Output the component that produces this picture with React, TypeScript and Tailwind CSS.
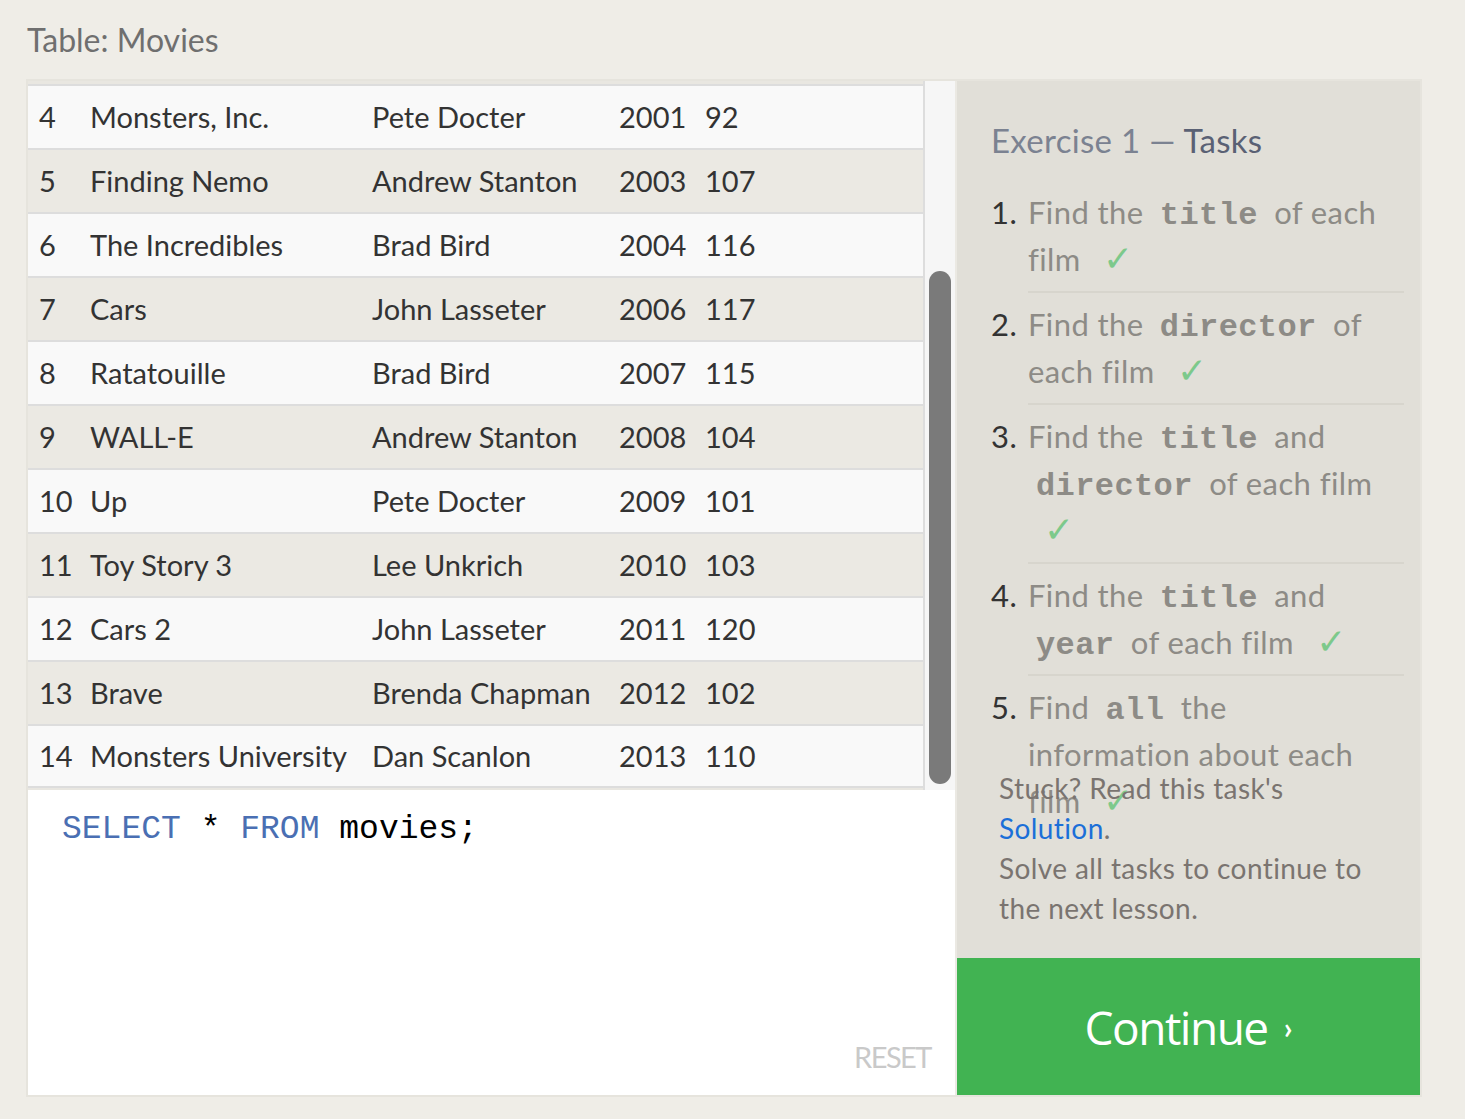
import React from 'react';

type Movie = { id: number; title: string; director: string; year: number; length: number };

const movies: Movie[] = [
  { id: 4, title: 'Monsters, Inc.', director: 'Pete Docter', year: 2001, length: 92 },
  { id: 5, title: 'Finding Nemo', director: 'Andrew Stanton', year: 2003, length: 107 },
  { id: 6, title: 'The Incredibles', director: 'Brad Bird', year: 2004, length: 116 },
  { id: 7, title: 'Cars', director: 'John Lasseter', year: 2006, length: 117 },
  { id: 8, title: 'Ratatouille', director: 'Brad Bird', year: 2007, length: 115 },
  { id: 9, title: 'WALL-E', director: 'Andrew Stanton', year: 2008, length: 104 },
  { id: 10, title: 'Up', director: 'Pete Docter', year: 2009, length: 101 },
  { id: 11, title: 'Toy Story 3', director: 'Lee Unkrich', year: 2010, length: 103 },
  { id: 12, title: 'Cars 2', director: 'John Lasseter', year: 2011, length: 120 },
  { id: 13, title: 'Brave', director: 'Brenda Chapman', year: 2012, length: 102 },
  { id: 14, title: 'Monsters University', director: 'Dan Scanlon', year: 2013, length: 110 },
];

function Code({ children }: { children: React.ReactNode }) {
  return (
    <code className="px-[8px] font-['Liberation_Mono',monospace] text-[32px] leading-none font-bold text-[#8d8b86]">
      {children}
    </code>
  );
}

function Check({ className = '' }: { className?: string }) {
  return (
    <span className={`font-['DejaVu_Sans',sans-serif] text-[36px] leading-none text-[#7dc98b] ${className}`}>✓</span>
  );
}

function Task({ n, last, children }: { n: number; last?: boolean; children: React.ReactNode }) {
  return (
    <li className="flex">
      <span className="w-[37px] shrink-0 py-2 text-[#333]">{n}.</span>
      <div className={`flex-1 py-2 ${last ? '' : 'border-b-2 border-[#d7d5cd]'}`}>{children}</div>
    </li>
  );
}

export default function App() {
  return (
    <div className="min-h-screen bg-[#efede7] font-['Lato',sans-serif]">
      <h1 className="pl-[27px] pt-[20px] pb-[19px] text-[32px] leading-[40px] text-[#6f6f6f]">Table: Movies</h1>

      <div className="ml-[26px] flex h-[1018px] w-[1396px] border-2 border-[#e6e4dd]">
        {/* left: result table + editor */}
        <div className="flex w-[927px] flex-col">
          <div className="flex h-[709px] shrink-0">
            <div className="flex-1 bg-[#e9e7e1] pt-[3px]">
              {movies.map((m, i) => (
                <div
                  key={m.id}
                  className={`grid h-[64px] grid-cols-[51px_282px_247px_86px_1fr] items-center border-t-2 border-[#dddddd] pl-[11px] text-[29px] text-[#333] ${
                    i % 2 === 0 ? 'bg-[#f9f9f9]' : 'bg-[#ebe9e3]'
                  } ${i === movies.length - 1 ? 'border-b-2' : ''}`}
                >
                  <span>{m.id}</span>
                  <span>{m.title}</span>
                  <span>{m.director}</span>
                  <span>{m.year}</span>
                  <span>{m.length}</span>
                </div>
              ))}
            </div>
            <div className="w-[32px] border-l-2 border-[#dddddd] bg-[#f6f6f6] pl-[4px] pt-[190px]">
              <div className="h-[513px] w-[22px] rounded-full bg-[#7a7a7a]" />
            </div>
          </div>

          <div className="flex flex-1 flex-col bg-white pl-[34px] pr-[24px] pt-[20px] pb-[22px]">
            <div className="font-['Liberation_Mono',monospace] text-[33px] leading-[40px] text-black">
              <span className="text-[#4a6fb3]">SELECT</span> * <span className="text-[#4a6fb3]">FROM</span> movies;
            </div>
            <div className="mt-auto self-end text-[29px] leading-[32px] tracking-[-1.5px] text-[#c9c9c9]">RESET</div>
          </div>
        </div>

        {/* right: tasks panel */}
        <div className="flex w-[465px] flex-col border-l-2 border-[#ebe9e3] bg-[#e1dfd8]">
          <div className="pl-[34px] pr-[16px]">
            <h2 className="pt-[39px] text-[33px] leading-[40px] tracking-[0.3px] text-[#7b8291]">
              Exercise 1 — <span className="text-[#5a6174]">Tasks</span>
            </h2>
            <ol className="mt-[21px] h-[587px] text-[31px] leading-[47px] tracking-[0.4px] text-[#8d8b86]">
              <Task n={1}>
                Find the <Code>title</Code> of each
                <br />
                film <Check className="ml-[14px]" />
              </Task>
              <Task n={2}>
                Find the <Code>director</Code> of
                <br />
                each film <Check className="ml-[14px]" />
              </Task>
              <Task n={3}>
                Find the <Code>title</Code> and
                <br />
                <Code>director</Code> of each film
                <br />
                <Check className="ml-[16px]" />
              </Task>
              <Task n={4}>
                Find the <Code>title</Code> and
                <br />
                <Code>year</Code> of each film <Check className="ml-[14px]" />
              </Task>
              <Task n={5} last>
                Find <Code>all</Code> the
                <br />
                information about each
                <br />
                film <Check className="ml-[14px]" />
              </Task>
            </ol>
          </div>

          <div className="pl-[42px] text-[28px] leading-[40px] tracking-[0.4px] text-[#7a7470]">
            <p>
              Stuck? Read this task's
              <br />
              <span className="text-[#1b6fd8]">Solution</span>.
            </p>
            <p>
              Solve all tasks to continue to
              <br />
              the next lesson.
            </p>
          </div>

          <button className="mt-auto flex h-[137px] shrink-0 items-center justify-center gap-[16px] bg-[#41b352] text-white">
            <span className="font-['Open_Sans',sans-serif] text-[46px] leading-none tracking-[-1.5px]">Continue</span>
            <span className="text-[30px] leading-none font-bold">›</span>
          </button>
        </div>
      </div>
    </div>
  );
}
